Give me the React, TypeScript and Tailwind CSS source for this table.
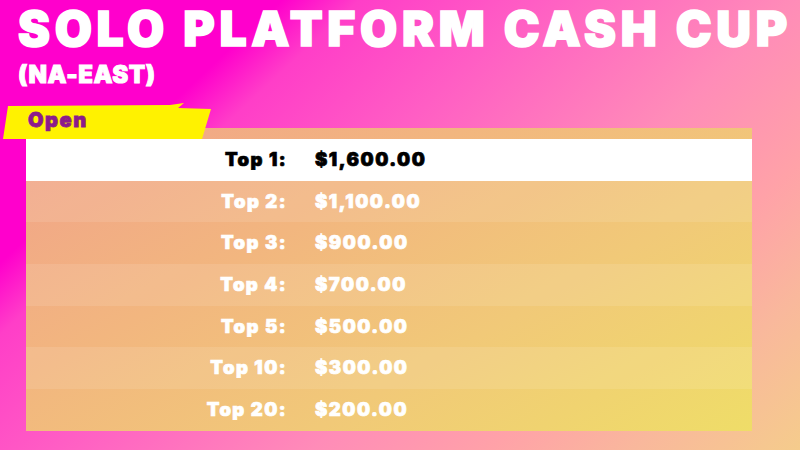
import React from "react";

const rows = [
  { label: "Top 1:", value: "$1,600.00" },
  { label: "Top 2:", value: "$1,100.00" },
  { label: "Top 3:", value: "$900.00" },
  { label: "Top 4:", value: "$700.00" },
  { label: "Top 5:", value: "$500.00" },
  { label: "Top 10:", value: "$300.00" },
  { label: "Top 20:", value: "$200.00" },
];

export default function App() {
  return (
    <div
      className="relative w-[800px] h-[450px] overflow-hidden bg-[linear-gradient(137deg,#ff00cc_0%,#ff00cc_22%,#ff3ec8_28%,#ff5ec4_42%,#ff8cb8_62%,#ffa2a8_76%,#f9b89c_87%,#f5cc8c_100%)]"
      style={{ fontFamily: "Inter, 'Liberation Sans', sans-serif" }}
    >
      <div className="pl-[18px] pt-[5px]">
        <h1 className="text-white font-black text-[48px] leading-[47px] tracking-[4.7px] whitespace-nowrap [-webkit-text-stroke-width:1.6px]">
          SOLO PLATFORM CASH CUP
        </h1>
        <div className="text-white font-black text-[24px] leading-[28px] tracking-[0.5px] mt-[9px] [-webkit-text-stroke-width:0.9px]">
          (NA-EAST)
        </div>
      </div>

      <div className="relative ml-[26px] mt-[39px] w-[726px] bg-[linear-gradient(150deg,#f1a28a_0%,#f2b67f_35%,#f1c978_65%,#efdd68_100%)]">
        <div className="h-[11px]" />
        {rows.map((r, i) => (
          <div
            key={r.label}
            className={
              i === 0
                ? "flex items-center h-[41.7px] bg-white text-black"
                : i % 2 === 1
                ? "flex items-center h-[41.7px] bg-white/10 text-white"
                : "flex items-center h-[41.7px] text-white"
            }
          >
            <div className="w-[261px] text-right text-[18.5px] font-black tracking-[1.4px] [-webkit-text-stroke-width:0.7px]">
              {r.label}
            </div>
            <div className="ml-[28px] text-[18.5px] font-black tracking-[1.5px] [-webkit-text-stroke-width:0.7px]">
              {r.value}
            </div>
          </div>
        ))}

        <div className="absolute left-[-26px] top-[-26px] w-[215px] h-[38px]">
          <svg width="215" height="38" viewBox="0 0 215 38" className="absolute inset-0">
            <polygon
              points="8,4 170,3 184,1 178,6 211,7 202,37 3,37"
              fill="#fff200"
            />
          </svg>
          <div className="absolute left-[28px] top-[7px] text-[20px] leading-[22px] font-black text-[#8c1a8c] tracking-[1.6px] [-webkit-text-stroke-width:0.8px]">
            Open
          </div>
        </div>
      </div>
    </div>
  );
}
